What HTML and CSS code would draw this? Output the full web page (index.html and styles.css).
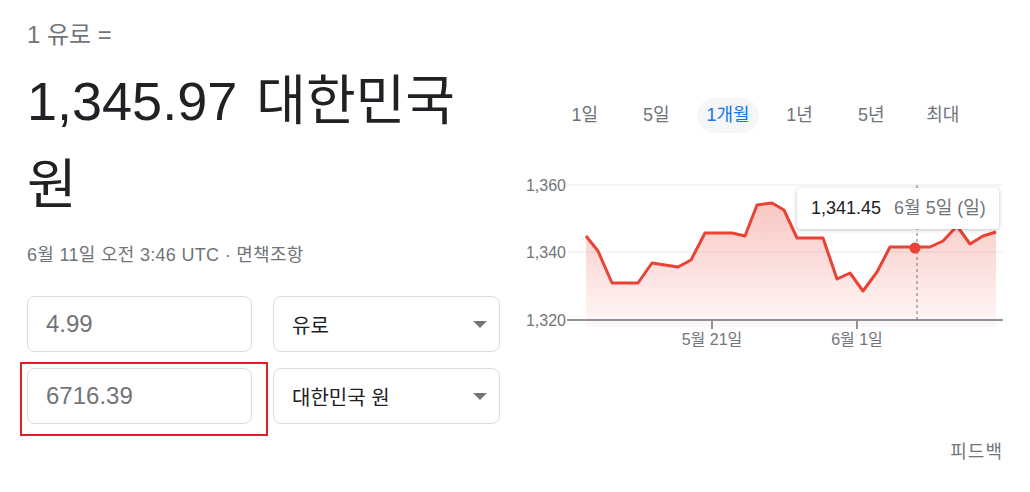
FILE: index.html
```html
<!DOCTYPE html>
<html lang="ko">
<head>
  <meta charset="UTF-8">
  <meta name="viewport" content="width=device-width, initial-scale=1.0">
  <title>유로 → 대한민국 원</title>
  <link rel="stylesheet" href="styles.css">
</head>
<body>
  <div class="page">

    <!-- 왼쪽: 환율 결과 + 변환기 -->
    <div class="left">
      <div class="from">1 유로 =</div>
      <div class="result">1,345.97 대한민국 원</div>
      <div class="date">6월 11일 오전 3:46 UTC · 면책조항</div>

      <div class="converter">
        <div class="field">4.99</div>
        <div class="select">
          <span>유로</span>
          <span class="arrow"></span>
        </div>
        <div class="field highlight">6716.39</div>
        <div class="select">
          <span>대한민국 원</span>
          <span class="arrow"></span>
        </div>
      </div>
    </div>

    <!-- 오른쪽: 기간 탭 + 차트 -->
    <div class="right">
      <div class="tabs">
        <div class="tab"><span>1일</span></div>
        <div class="tab"><span>5일</span></div>
        <div class="tab active"><span>1개월</span></div>
        <div class="tab"><span>1년</span></div>
        <div class="tab"><span>5년</span></div>
        <div class="tab"><span>최대</span></div>
      </div>

      <div class="chart">
        <svg width="485" height="180" viewBox="0 0 485 180">
          <defs>
            <linearGradient id="area" x1="0" y1="30" x2="0" y2="155" gradientUnits="userSpaceOnUse">
              <stop offset="0" stop-color="#ea4335" stop-opacity="0.3"/>
              <stop offset="1" stop-color="#ea4335" stop-opacity="0.04"/>
            </linearGradient>
          </defs>

          <!-- 격자선 -->
          <line class="grid" x1="47" y1="13" x2="483" y2="13"/>
          <line class="grid" x1="47" y1="80" x2="483" y2="80"/>

          <!-- 영역 + 선 -->
          <polygon fill="url(#area)" points="66,64 78,79 92,111 118,111 132,91 158,95 171,88 185,61 212,61 225,64 237,33 252,31 264,38 277,66 303,66 317,107 330,101 343,119 357,100 370,75 395,75 410,75 423,69 437,54 450,72 463,64 476,60 476,155 66,155"/>
          <polyline class="line" points="66,64 78,79 92,111 118,111 132,91 158,95 171,88 185,61 212,61 225,64 237,33 252,31 264,38 277,66 303,66 317,107 330,101 343,119 357,100 370,75 395,75 410,75 423,69 437,54 450,72 463,64 476,60"/>

          <!-- 축 -->
          <line class="axis" x1="47" y1="148" x2="483" y2="148"/>
          <line class="tick" x1="192" y1="148" x2="192" y2="157"/>
          <line class="tick" x1="337" y1="148" x2="337" y2="157"/>

          <text class="label" x="46" y="19" text-anchor="end">1,360</text>
          <text class="label" x="46" y="86" text-anchor="end">1,340</text>
          <text class="label" x="46" y="154" text-anchor="end">1,320</text>
          <text class="label" x="192" y="173" text-anchor="middle">5월 21일</text>
          <text class="label" x="337" y="173" text-anchor="middle">6월 1일</text>

          <!-- 커서 -->
          <line class="cursor" x1="397" y1="13" x2="397" y2="148"/>
          <circle cx="395" cy="76" r="5.5" fill="#ea4335"/>
        </svg>

        <div class="tooltip">
          <span class="price">1,341.45</span>
          <span class="day">6월 5일 (일)</span>
        </div>
      </div>

      <div class="feedback">피드백</div>
    </div>

  </div>
</body>
</html>
```

FILE: styles.css
```css
/* 기본 리셋 */
* {
  margin: 0;
  padding: 0;
  box-sizing: border-box;
}

body {
  font-family: "Liberation Sans", "Noto Sans CJK KR", sans-serif;
  background: #fff;
  color: #202124;
}

.page {
  display: flex;
  gap: 20px;
  padding: 0 27px;
}

/* 왼쪽 영역 */
.left {
  width: 473px;
}

.from {
  margin-top: 21px;
  font-size: 24px;
  line-height: 28px;
  color: #70757a;
}

.result {
  margin-top: 10px;
  font-size: 54px;
  line-height: 84px;
  color: #202124;
  word-spacing: 4px;
}

.date {
  margin-top: 16px;
  font-size: 18px;
  line-height: 24px;
  color: #70757a;
  letter-spacing: 0.3px;
}

/* 변환기 */
.converter {
  margin-top: 29px;
  display: grid;
  grid-template-columns: 225px 227px;
  grid-auto-rows: 56px;
  column-gap: 21px;
  row-gap: 16px;
}

.field,
.select {
  border: 1px solid #dadce0;
  border-radius: 8px;
  display: flex;
  align-items: center;
  padding-left: 18px;
}

.field {
  font-size: 24px;
  color: #70757a;
  position: relative;
}

.select {
  justify-content: space-between;
  padding-right: 12px;
  font-size: 20px;
  color: #202124;
}

.arrow {
  width: 0;
  height: 0;
  border-left: 7px solid transparent;
  border-right: 7px solid transparent;
  border-top: 7px solid #70757a;
}

/* 빨간 강조 테두리 */
.highlight::after {
  content: "";
  position: absolute;
  left: -8px;
  top: -7px;
  width: 244px;
  height: 70px;
  border: 2px solid #e21f26;
}

/* 오른쪽 영역 */
.right {
  width: 483px;
  padding-top: 98px;
}

.tabs {
  display: grid;
  grid-template-columns: repeat(6, 71.6px);
  margin-left: 29px;
  height: 35px;
}

.tab {
  display: flex;
  justify-content: center;
  font-size: 18px;
  color: #70757a;
}

.tab span {
  display: block;
  height: 35px;
  line-height: 35px;
  padding: 0 9px;
  border-radius: 18px;
}

.tab.active span {
  background: #f4f6f8;
  color: #1a73e8;
}

/* 차트 */
.chart {
  position: relative;
  margin-top: 39px;
  height: 180px;
}

.chart svg {
  display: block;
}

.grid {
  stroke: #ececec;
  stroke-width: 1;
}

.axis,
.tick {
  stroke: #8f9399;
  stroke-width: 2;
}

.line {
  fill: none;
  stroke: #ea4335;
  stroke-width: 3;
  stroke-linejoin: round;
}

.cursor {
  stroke: #70757a;
  stroke-width: 1;
  stroke-dasharray: 3 3;
}

.label {
  font-family: "Liberation Sans", "Noto Sans CJK KR", sans-serif;
  font-size: 16px;
  fill: #70757a;
}

.tooltip {
  position: absolute;
  left: 277px;
  top: 16px;
  height: 41px;
  line-height: 41px;
  padding: 0 13px 0 14px;
  background: #fff;
  border-radius: 4px;
  box-shadow: 0 1px 4px rgba(0, 0, 0, 0.25);
  font-size: 18px;
  white-space: nowrap;
}

.tooltip .price {
  color: #202124;
}

.tooltip .day {
  margin-left: 8px;
  color: #70757a;
}

.feedback {
  margin-top: 88px;
  text-align: right;
  font-size: 18px;
  line-height: 24px;
  color: #70757a;
  letter-spacing: 1px;
}
```
